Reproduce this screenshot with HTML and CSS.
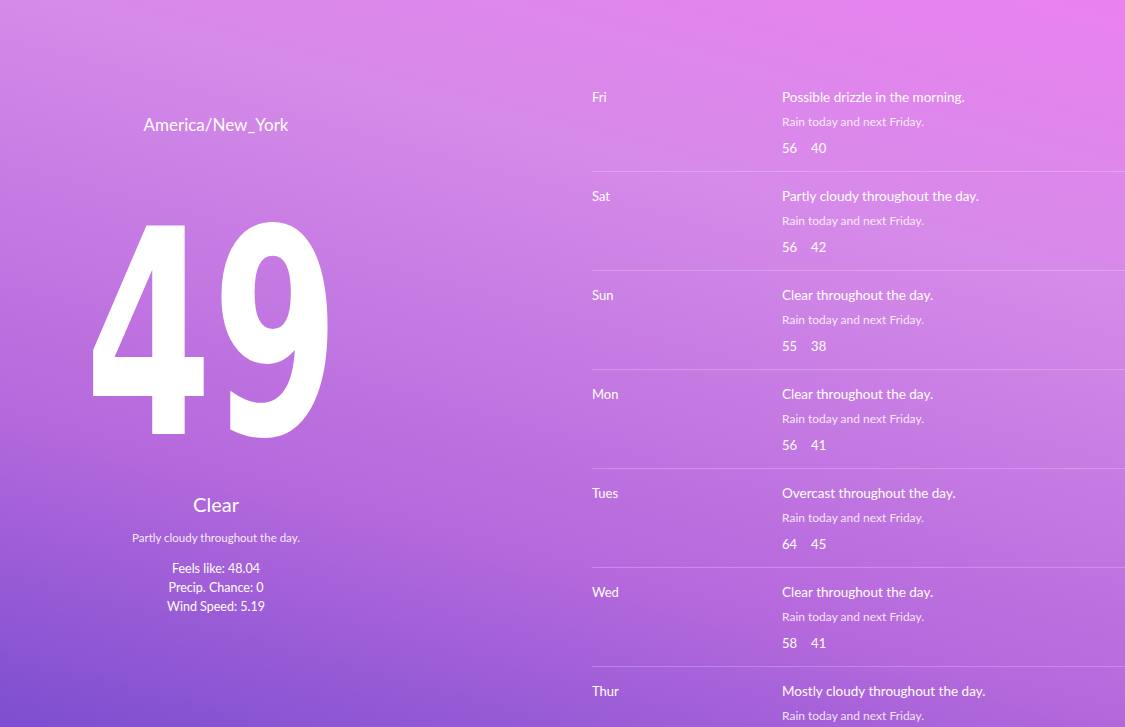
FILE: index.html
```html
<!DOCTYPE html>
<html lang="en">
<head>
    <meta charset="UTF-8">
    <meta name="viewport" content="width=device-width, initial-scale=1.0">
    <title>Weather</title>
    <link rel="stylesheet" href="styles.css">
</head>
<body>

<div class="container">
    <div class="current">
        <h2 class="city">America/New_York</h2>
        <div class="temp"><span>49</span></div>
        <h3 class="condition">Clear</h3>
        <p class="summary">Partly cloudy throughout the day.</p>
        <ul class="stats">
            <li>Feels like: 48.04</li>
            <li>Precip. Chance: 0</li>
            <li>Wind Speed: 5.19</li>
        </ul>
    </div>

    <div class="forecast">
        <div class="day">
            <div class="day-name">Fri</div>
            <div class="day-info">
                <p class="day-summary">Possible drizzle in the morning.</p>
                <p class="day-note">Rain today and next Friday.</p>
                <p class="day-temps"><span>56</span><span>40</span></p>
            </div>
        </div>
        <div class="day">
            <div class="day-name">Sat</div>
            <div class="day-info">
                <p class="day-summary">Partly cloudy throughout the day.</p>
                <p class="day-note">Rain today and next Friday.</p>
                <p class="day-temps"><span>56</span><span>42</span></p>
            </div>
        </div>
        <div class="day">
            <div class="day-name">Sun</div>
            <div class="day-info">
                <p class="day-summary">Clear throughout the day.</p>
                <p class="day-note">Rain today and next Friday.</p>
                <p class="day-temps"><span>55</span><span>38</span></p>
            </div>
        </div>
        <div class="day">
            <div class="day-name">Mon</div>
            <div class="day-info">
                <p class="day-summary">Clear throughout the day.</p>
                <p class="day-note">Rain today and next Friday.</p>
                <p class="day-temps"><span>56</span><span>41</span></p>
            </div>
        </div>
        <div class="day">
            <div class="day-name">Tues</div>
            <div class="day-info">
                <p class="day-summary">Overcast throughout the day.</p>
                <p class="day-note">Rain today and next Friday.</p>
                <p class="day-temps"><span>64</span><span>45</span></p>
            </div>
        </div>
        <div class="day">
            <div class="day-name">Wed</div>
            <div class="day-info">
                <p class="day-summary">Clear throughout the day.</p>
                <p class="day-note">Rain today and next Friday.</p>
                <p class="day-temps"><span>58</span><span>41</span></p>
            </div>
        </div>
        <div class="day">
            <div class="day-name">Thur</div>
            <div class="day-info">
                <p class="day-summary">Mostly cloudy throughout the day.</p>
                <p class="day-note">Rain today and next Friday.</p>
            </div>
        </div>
    </div>
</div>

</body>
</html>
```

FILE: styles.css
```css
html, body {
    height: 100%;
}
body {
    margin: 0;
    padding: 0;
    font-family: Lato, "Open Sans", sans-serif;
    color: #fff;
    background: linear-gradient(15deg, #7c4ed0 0%, #b468dc 30%, #d58ae9 71%, #ea82f0 100%);
    overflow: hidden;
}
.container {
    display: grid;
    grid-template-columns: 432px 1fr;
}
.current {
    text-align: center;
    padding-top: 113px;
}
.city {
    margin: 0;
    font-size: 17px;
    font-weight: 400;
    line-height: 24px;
}
.temp {
    margin-top: 53px;
    font-family: "DejaVu Sans Condensed", "DejaVu Sans", sans-serif;
    font-weight: 700;
    font-size: 286px;
    line-height: 290px;
}
.temp span {
    display: inline-block;
    transform: scaleX(0.71);
    margin-left: -8px;
}
.condition {
    margin: 11px 0 0;
    font-size: 20px;
    font-weight: 400;
    line-height: 26px;
}
.summary {
    margin: 12px 0 0;
    font-size: 11.5px;
    font-weight: 400;
    line-height: 18px;
    color: rgba(255, 255, 255, 0.9);
}
.stats {
    list-style: none;
    margin: 12px 0 0;
    padding: 0;
    font-size: 12.5px;
    line-height: 19px;
}
.forecast {
    margin-left: 160px;
    padding-top: 73px;
}
.day {
    display: flex;
    padding: 14px 0 13px;
    border-bottom: 1px solid rgba(255, 255, 255, 0.22);
}
.day-name {
    width: 190px;
    font-size: 13px;
    line-height: 20px;
}
.day-info p {
    margin: 0;
    line-height: 20px;
}
.day-summary {
    font-size: 13.5px;
}
.day-note {
    margin-top: 5px !important;
    font-size: 12px;
    color: rgba(255, 255, 255, 0.85);
}
.day-temps {
    margin-top: 6px !important;
    font-size: 13px;
}
.day-temps span {
    margin-right: 14px;
}
```
